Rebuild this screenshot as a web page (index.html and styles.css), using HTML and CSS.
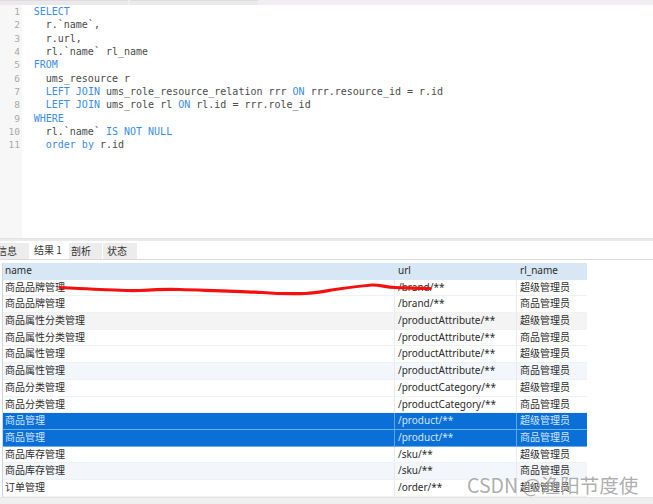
FILE: index.html
```html
<!DOCTYPE html>
<html lang="zh">
<head>
<meta charset="utf-8">
<title>Query</title>
<link rel="stylesheet" href="styles.css">
</head>
<body>
<div class="app">
  <div class="topbar"><div class="seg"></div><div class="seg"></div></div>
  <div class="editor">
    <div class="gutter">
      <div>1</div><div>2</div><div>3</div><div>4</div><div>5</div><div>6</div><div>7</div><div>8</div><div>9</div><div>10</div><div>11</div>
    </div>
    <div class="code">
      <div class="ln"><span class="kw">SELECT</span></div>
      <div class="ln">  r.`name`,</div>
      <div class="ln">  r.url,</div>
      <div class="ln">  rl.`name` rl_name</div>
      <div class="ln"><span class="kw">FROM</span></div>
      <div class="ln">  ums_resource r</div>
      <div class="ln">  <span class="kw">LEFT JOIN</span> ums_role_resource_relation rrr <span class="kw">ON</span> rrr.resource_id = r.id</div>
      <div class="ln">  <span class="kw">LEFT JOIN</span> ums_role rl <span class="kw">ON</span> rl.id = rrr.role_id</div>
      <div class="ln"><span class="kw">WHERE</span></div>
      <div class="ln">  rl.`name` <span class="kw">IS NOT NULL</span></div>
      <div class="ln">  <span class="kw">order by</span> r.id</div>
    </div>
  </div>
  <div class="divider"></div>
  <div class="tabs">
    <div class="tab t-info">信息</div>
    <div class="tab t-result active">结果 1</div>
    <div class="tab t-profile">剖析</div>
    <div class="tab t-status">状态</div>
  </div>
  <div class="results">
    <div class="grid">
      <div class="row head"><div class="c1">name</div><div class="c2">url</div><div class="c3">rl_name</div></div>
      <div class="row"><div class="c1">商品品牌管理</div><div class="c2">/brand/**</div><div class="c3">超级管理员</div></div>
      <div class="row"><div class="c1">商品品牌管理</div><div class="c2">/brand/**</div><div class="c3">商品管理员</div></div>
      <div class="row alt-gray"><div class="c1">商品属性分类管理</div><div class="c2">/productAttribute/**</div><div class="c3">超级管理员</div></div>
      <div class="row"><div class="c1">商品属性分类管理</div><div class="c2">/productAttribute/**</div><div class="c3">商品管理员</div></div>
      <div class="row"><div class="c1">商品属性管理</div><div class="c2">/productAttribute/**</div><div class="c3">超级管理员</div></div>
      <div class="row alt"><div class="c1">商品属性管理</div><div class="c2">/productAttribute/**</div><div class="c3">商品管理员</div></div>
      <div class="row"><div class="c1">商品分类管理</div><div class="c2">/productCategory/**</div><div class="c3">超级管理员</div></div>
      <div class="row"><div class="c1">商品分类管理</div><div class="c2">/productCategory/**</div><div class="c3">商品管理员</div></div>
      <div class="row sel"><div class="c1">商品管理</div><div class="c2">/product/**</div><div class="c3">超级管理员</div></div>
      <div class="row sel"><div class="c1">商品管理</div><div class="c2">/product/**</div><div class="c3">商品管理员</div></div>
      <div class="row"><div class="c1">商品库存管理</div><div class="c2">/sku/**</div><div class="c3">超级管理员</div></div>
      <div class="row alt"><div class="c1">商品库存管理</div><div class="c2">/sku/**</div><div class="c3">商品管理员</div></div>
      <div class="row"><div class="c1">订单管理</div><div class="c2">/order/**</div><div class="c3">超级管理员</div></div>
    </div>
    <svg class="scribble" width="653" height="40" viewBox="0 270 653 40">
      <path d="M60 289.5 C80 290.5 100 291.5 115 292 C125 292.5 130 293 140 292.5 C155 291.5 165 291 180 291.5 C210 292.5 240 293 262 294.5 C275 295.5 290 296 305 295.5 C318 295 325 293 335 291.5 C345 290 355 288.5 372 287 C380 286.8 385 289 395 289.5 C410 290 420 290.5 430 290.5" fill="none" stroke="#f50f0f" stroke-width="3.2" stroke-linecap="round"/>
    </svg>
  </div>
  <div class="bottombar"></div>
  <div class="watermark">CSDN @渔阳节度使</div>
</div>
</body>
</html>
```
FILE: styles.css
```css
* { box-sizing: border-box; }
html, body { margin: 0; padding: 0; background: #fff; }
body { width: 653px; height: 504px; overflow: hidden; }
.app { position: relative; width: 653px; height: 504px; display: flex; flex-direction: column; }

.topbar { height: 5px; background: #f0eef0; flex: none; display: flex; gap: 2px; }
.seg { width: 128px; height: 5px; background: #ebe9eb; border-top: 1px solid #dedcde; }

.editor { height: 233px; flex: none; display: flex; }
.gutter {
  width: 22px; background: #f7f7f7; color: #a9a9a9;
  font-family: "DejaVu Sans Mono", monospace; font-size: 9.5px;
  line-height: 13.35px; text-align: right; padding-right: 2px;
}
.code {
  padding-left: 11.7px;
  font-family: "DejaVu Sans Mono", monospace; font-size: 10px;
  line-height: 13.35px; color: #4a4a4a;
}
.ln { white-space: pre; height: 13.35px; }
.kw { color: #3b8de6; }

.divider { height: 3px; background: #ebebeb; border-top: 1px solid #e2e2e2; flex: none; }

.tabs {
  height: 19px; flex: none; display: flex; gap: 1px; align-items: flex-end;
  border-bottom: 1px solid #dadada; background: #fff;
  font-family: "Noto Sans CJK SC", sans-serif; font-size: 10px; color: #333;
}
.tab { background: #ececec; height: 16px; line-height: 15px; white-space: nowrap; }
.tab.active { background: #fff; height: 18px; line-height: 17px; }
.t-info { margin-left: -7px; padding: 0 12px 0 4px; }
.t-result { padding: 0 5px 0 4px; width: 38px; }
.t-profile { padding: 0 11px 0 2px; }
.t-status { padding: 0 10px 0 4px; }

.results { position: relative; flex: 1; padding: 3px 0 0 2px; }
.grid {
  width: 585px; border-left: 1px solid #cfd6de;
  font-family: "Noto Sans", "Noto Sans CJK SC", sans-serif; font-size: 10px; color: #2b2b2b;
}
.row { display: grid; grid-template-columns: 391px 122px 72px; height: 16.7px; line-height: 15.5px; border-bottom: 1px solid #eef2f6; background: #fff; }
.row > div { padding-left: 2px; white-space: nowrap; overflow: hidden; }
.row .c2 { padding-left: 3px; border-left: 1px solid #e6ebf1; }
.row .c3 { padding-left: 3px; border-left: 1px solid #e6ebf1; }
.row.head { background: #d8e7f6; border-bottom: 1px solid #d8e7f6; }
.row.head .c2, .row.head .c3 { border-left-color: #d8e7f6; }
.row.alt-gray { background: #f4f4f4; }
.row.alt { background: #f3f7fb; }
.row.sel { background: #0a6fd6; color: #d2e6fa; border-bottom: 1px solid #6aaeee; }
.row.sel .c2, .row.sel .c3 { border-left-color: #5ea6ea; }

.scribble { position: absolute; left: 0; top: 8px; pointer-events: none; }

.bottombar { height: 7px; background: #efefef; flex: none; border-top: 1px solid #e4e4e4; }

.watermark {
  position: absolute; left: 467px; top: 470px;
  font-family: "Noto Sans CJK SC", sans-serif; font-size: 19.5px;
  color: rgba(120, 120, 120, 0.62); white-space: nowrap;
  text-shadow: 0 0 1px rgba(255,255,255,0.6);
}
```
